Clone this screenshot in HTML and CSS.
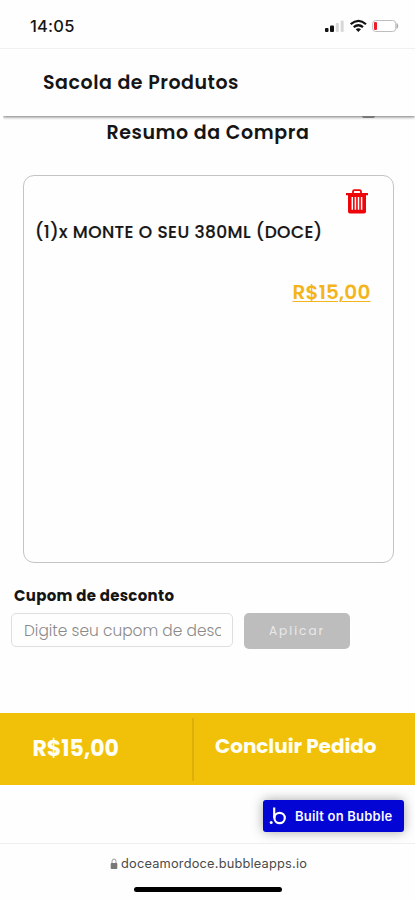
FILE: index.html
```html
<!DOCTYPE html>
<html lang="pt-BR">
<head>
<meta charset="utf-8">
<meta name="viewport" content="width=device-width, initial-scale=1">
<title>Sacola de Produtos</title>
<link rel="stylesheet" href="styles.css">
</head>
<body>
<div class="status">
  <span class="time">14:05</span>
  <svg class="indicators" width="76" height="16" viewBox="0 0 76 16">
    <rect x="1" y="10" width="3.5" height="4" rx="1" fill="#111"/>
    <rect x="6" y="7.5" width="4" height="6.5" rx="1" fill="#111"/>
    <rect x="11.8" y="5" width="3" height="9" rx="1" fill="#d8d8d8"/>
    <rect x="16.7" y="2.5" width="3" height="11.5" rx="1" fill="#d8d8d8"/>
    <path d="M26.7 6.2Q34.500 -.5 42 6.2M29.700 9.200Q34.400 5.300 39 9.200" fill="none" stroke="#111" stroke-width="2.200"/>
    <path d="M31.700 11.300Q34.300 9.400 37 11.300L34.300 14Z" fill="#111"/>
    <rect x="48.700" y="2.500" width="23" height="11" rx="3" fill="#fff" stroke="#bdbdbd"/>
    <path d="M72.500 4.500Q76 8 72.500 11.500Z" fill="#aaa"/>
    <rect x="50" y="4" width="3" height="8" rx="1" fill="#ee1c2b"/>
  </svg>
</div>
<header class="header"><h1 class="title">Sacola de Produtos</h1><i class="hidden-icon"></i></header>
<main class="content">
  <h2 class="summary">Resumo da Compra</h2>
  <section class="card">
    <svg class="trash" width="22" height="25" viewBox="0 0 22 25">
      <path d="M7 4V2.600Q7 1.200 8.500 1.200H13.500Q15 1.200 15 2.600V4" fill="none" stroke="#ed0509" stroke-width="1.800"/>
      <path d="M0 4H22V6.200H20V22.500Q20 24.500 18 24.500H4Q2 24.500 2 22.500V6.200H0Z" fill="#ed0509"/>
      <path d="M6.300 8V20.700M9.400 8V20.700M12.500 8V20.700M15.600 8V20.700" stroke="#fff" stroke-width="1.500"/>
    </svg>
    <p class="item">(1)x MONTE O SEU 380ML (DOCE)</p>
    <p class="price">R$15,00</p>
  </section>
  <section class="coupon">
    <label class="label" for="coupon">Cupom de desconto</label>
    <div class="row">
      <input class="field" id="coupon" placeholder="Digite seu cupom de desconto">
      <button class="apply">Aplicar</button>
    </div>
  </section>
</main>
<div class="checkout">
  <div class="total"><span class="amount">R$15,00</span></div>
  <div class="finish"><span class="order">Concluir Pedido</span></div>
</div>
<div class="badge-area">
  <div class="badge">
    <svg width="18" height="18" viewBox="0 0 18 18">
      <circle cx="2.200" cy="15.500" r="1.500" fill="#fff"/>
      <path d="M5.200 .5V11" stroke="#fff" stroke-width="2.200"/>
      <circle cx="10.600" cy="11" r="5.200" fill="none" stroke="#fff" stroke-width="2.200"/>
    </svg>
    <span class="built">Built on Bubble</span>
  </div>
</div>
<footer class="browser">
  <div class="address">
    <svg width="8" height="12" viewBox="0 0 8 12"><path d="M2 6V3.500Q2 1 4 1T6 3.500V6" fill="none" stroke="#999"/><rect x=".7" y="5" width="6.600" height="6" rx="1" fill="#777"/></svg>
    <span class="url">doceamordoce.bubbleapps.io</span>
  </div>
  <div class="home"></div>
</footer>
</body>
</html>
```

FILE: styles.css
```css
* { box-sizing: border-box; margin: 0; }
body { width: 415px; height: 900px; overflow: hidden; display: flex; flex-direction: column; background: #fefefe; color: #151515; font-family: Poppins, Inter, sans-serif; }
h1, h2, p, span, label { white-space: nowrap; }
.status { height: 49px; flex: none; display: flex; justify-content: space-between; padding: 16px 15px 0 30px; border-bottom: 1px solid #f0f0f0; }
.time { font-family: Inter, sans-serif; font-size: 16.5px; line-height: 20px; font-weight: 500; letter-spacing: .2px; }
.indicators { margin-top: 2px; }
.header { position: relative; height: 67px; flex: none; margin-left: 3px; padding: 21px 0 0 40px; background: #fefefe; box-shadow: 0 1px 3px rgba(0,0,0,.55); clip-path: inset(0 0 -8px 0); }
.title { font-size: 19px; line-height: 26px; font-weight: 600; letter-spacing: .53px; }
/* Bottom edge of the icon that scrolls under the header */
.hidden-icon { position: absolute; right: 40px; bottom: -2px; width: 13px; height: 2px; border-radius: 0 0 7px 7px; background: #777; }
.content { height: 597px; flex: none; }
.summary { margin-top: 4px; padding-left: 106.5px; font-size: 19px; line-height: 26px; font-weight: 600; letter-spacing: .57px; }
.card { width: 371px; height: 388px; margin: 29px 0 0 22.5px; padding: 13px 22px 0 12px; display: flex; flex-direction: column; border: 1px solid #c4c4c4; border-radius: 11px; }
.trash { align-self: flex-end; margin-right: 3px; }
.item { margin-top: 6px; margin-left: -.5px; font-size: 17px; line-height: 24px; font-weight: 500; letter-spacing: .43px; -webkit-text-stroke: .2px currentColor; }
.price { align-self: flex-end; margin-top: 35px; font-size: 20px; line-height: 26px; font-weight: 600; letter-spacing: .15px; color: #f3b51b; text-decoration: underline; text-decoration-thickness: 1px; text-underline-offset: 2px; }
.coupon { padding: 23px 0 0 11px; }
.label { display: block; padding-left: 3px; font-size: 15px; line-height: 20px; font-weight: 700; letter-spacing: .3px; }
.row { display: flex; gap: 11px; margin-top: 7px; }
.field { width: 222px; height: 34px; padding: 0 11px 0 12px; border: 1px solid #dedede; border-radius: 5px; background: #fefefe; font: 300 15.4px Poppins, Inter, sans-serif; }
.field::placeholder { color: #8a8a8a; opacity: 1; }
.apply { width: 106px; height: 36px; padding: 0; border: 0; border-radius: 5px; background: #bdbdbd; color: #e9e9e9; font: 400 12px Poppins, Inter, sans-serif; letter-spacing: 2px; }
.checkout { height: 72px; flex: none; display: flex; background: #f0c108; color: #fffef5; font-weight: 700; }
.total { width: 194px; margin: 5px 0 4px; padding: 18px 0 0 32.500px; border-right: 2px solid #deaf09; }
.amount { display: block; font-size: 22px; line-height: 26px; }
.finish { padding: 20px 0 0 21px; }
.order { display: block; font-size: 20px; line-height: 26px; letter-spacing: -.05px; }
.badge-area { height: 59px; flex: none; display: flex; justify-content: flex-end; align-items: flex-start; padding: 15px 11px 0 0; border-bottom: 1px solid #eee; overflow: hidden; }
.badge { width: 141px; height: 32px; display: flex; align-items: center; gap: 8px; padding-left: 6px; border-radius: 3px; background: #0205d3; color: #f7f7ff; box-shadow: 0 0 12px rgba(0,0,0,.35); }
.built { font-family: Inter, sans-serif; font-size: 13px; line-height: 18px; font-weight: 600; letter-spacing: .2px; }
.browser { flex: 1; }
.address { display: flex; align-items: center; gap: 3px; padding: 11px 0 0 110px; color: #4a4a4a; }
.url { font-family: Inter, sans-serif; font-size: 12.8px; line-height: 18px; letter-spacing: .2px; }
.home { width: 148px; height: 5px; margin: 14px 0 0 134px; border-radius: 3px; background: #000; }
```
